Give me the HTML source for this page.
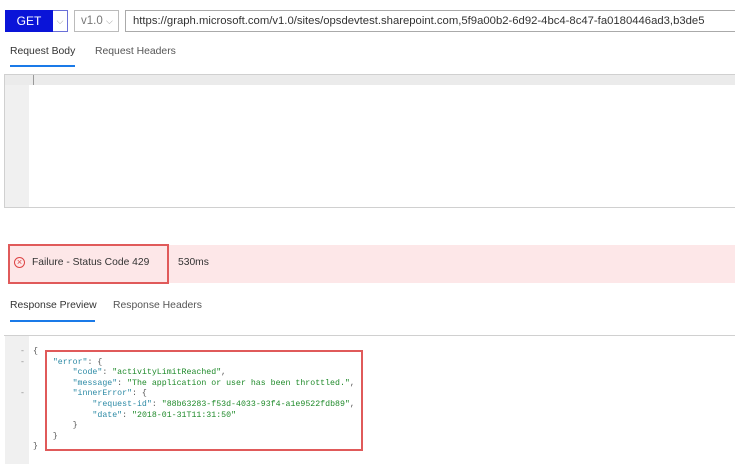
<!DOCTYPE html>
<html><head><meta charset="utf-8"><style>
*{margin:0;padding:0;box-sizing:border-box}
body{width:735px;height:464px;background:#fff;position:relative;overflow:hidden;font-family:"Liberation Sans",sans-serif;color:#333}
.a{position:absolute}
.mono{font-family:"Liberation Mono",monospace;font-size:8.25px;white-space:pre;line-height:10.6px}
.k{color:#2c8aa5}.s{color:#1f8a2a}.p{color:#555}
</style></head><body>
<div class="a" style="left:5px;top:10px;width:48px;height:22px;background:#0a14d8;color:#fff;font-size:12px;line-height:22px;text-align:center">GET</div>
<div class="a" style="left:53px;top:10px;width:15px;height:22px;border:1px solid #6a70d8;border-left:none;color:#999;font-size:9px;line-height:20px;text-align:center">⌵</div>
<div class="a" style="left:74px;top:10px;width:45px;height:22px;border:1px solid #bbb;color:#777;font-size:11.5px;line-height:20px;padding-left:6px">v1.0 <span style="font-size:9px;color:#999">⌵</span></div>
<div class="a" style="left:125px;top:10px;width:610px;height:22px;border:1px solid #aaa;border-right:none;color:#333;font-size:11.3px;line-height:20px;padding-left:7px;white-space:nowrap;overflow:hidden">https://graph.microsoft.com/v1.0/sites/opsdevtest.sharepoint.com,5f9a00b2-6d92-4bc4-8c47-fa0180446ad3,b3de5</div>
<div class="a" style="left:10px;top:46px;font-size:10.4px;color:#333">Request Body</div>
<div class="a" style="left:95px;top:46px;font-size:10.4px;color:#555">Request Headers</div>
<div class="a" style="left:10px;top:65px;width:65px;height:2px;background:#1a7ae8"></div>
<div class="a" style="left:4px;top:74px;width:731px;height:134px;border:1px solid #d0d0d0;border-right:none"></div>
<div class="a" style="left:5px;top:75px;width:24px;height:132px;background:#f0f0f0"></div>
<div class="a" style="left:5px;top:75px;width:730px;height:10px;background:#ebebeb"></div>
<div class="a" style="left:33px;top:75px;width:1px;height:10px;background:#999"></div>
<div class="a" style="left:8px;top:245px;width:727px;height:38px;background:#fde7e8"></div>
<div class="a" style="left:8px;top:244px;width:161px;height:40px;border:2px solid #e05a5a"></div>
<div class="a" style="left:14px;top:257px;width:11px;height:11px;border:1px solid #d44;border-radius:50%;color:#d44;font-size:9px;line-height:9px;text-align:center">×</div>
<div class="a" style="left:32px;top:257px;font-size:10.3px;color:#333">Failure - Status Code 429</div>
<div class="a" style="left:178px;top:257px;font-size:10.3px;color:#333">530ms</div>
<div class="a" style="left:10px;top:300px;font-size:10.4px;color:#333">Response Preview</div>
<div class="a" style="left:113px;top:300px;font-size:10.4px;color:#555">Response Headers</div>
<div class="a" style="left:10px;top:320px;width:85px;height:2px;background:#1a7ae8"></div>
<div class="a" style="left:4px;top:335px;width:731px;height:1px;background:#d0d0d0"></div>
<div class="a" style="left:5px;top:336px;width:24px;height:128px;background:#f0f0f0"></div>
<div class="a mono" style="left:20px;top:347px;color:#888">-
-


-</div>
<div class="a mono" style="left:33px;top:347px;color:#555">{
    <span class="k">"error"</span>: {
        <span class="k">"code"</span>: <span class="s">"activityLimitReached"</span>,
        <span class="k">"message"</span>: <span class="s">"The application or user has been throttled."</span>,
        <span class="k">"innerError"</span>: {
            <span class="k">"request-id"</span>: <span class="s">"88b63283-f53d-4033-93f4-a1e9522fdb89"</span>,
            <span class="k">"date"</span>: <span class="s">"2018-01-31T11:31:50"</span>
        }
    }
}</div>
<div class="a" style="left:45px;top:350px;width:318px;height:101px;border:2px solid #e05a5a"></div>
</body></html>
